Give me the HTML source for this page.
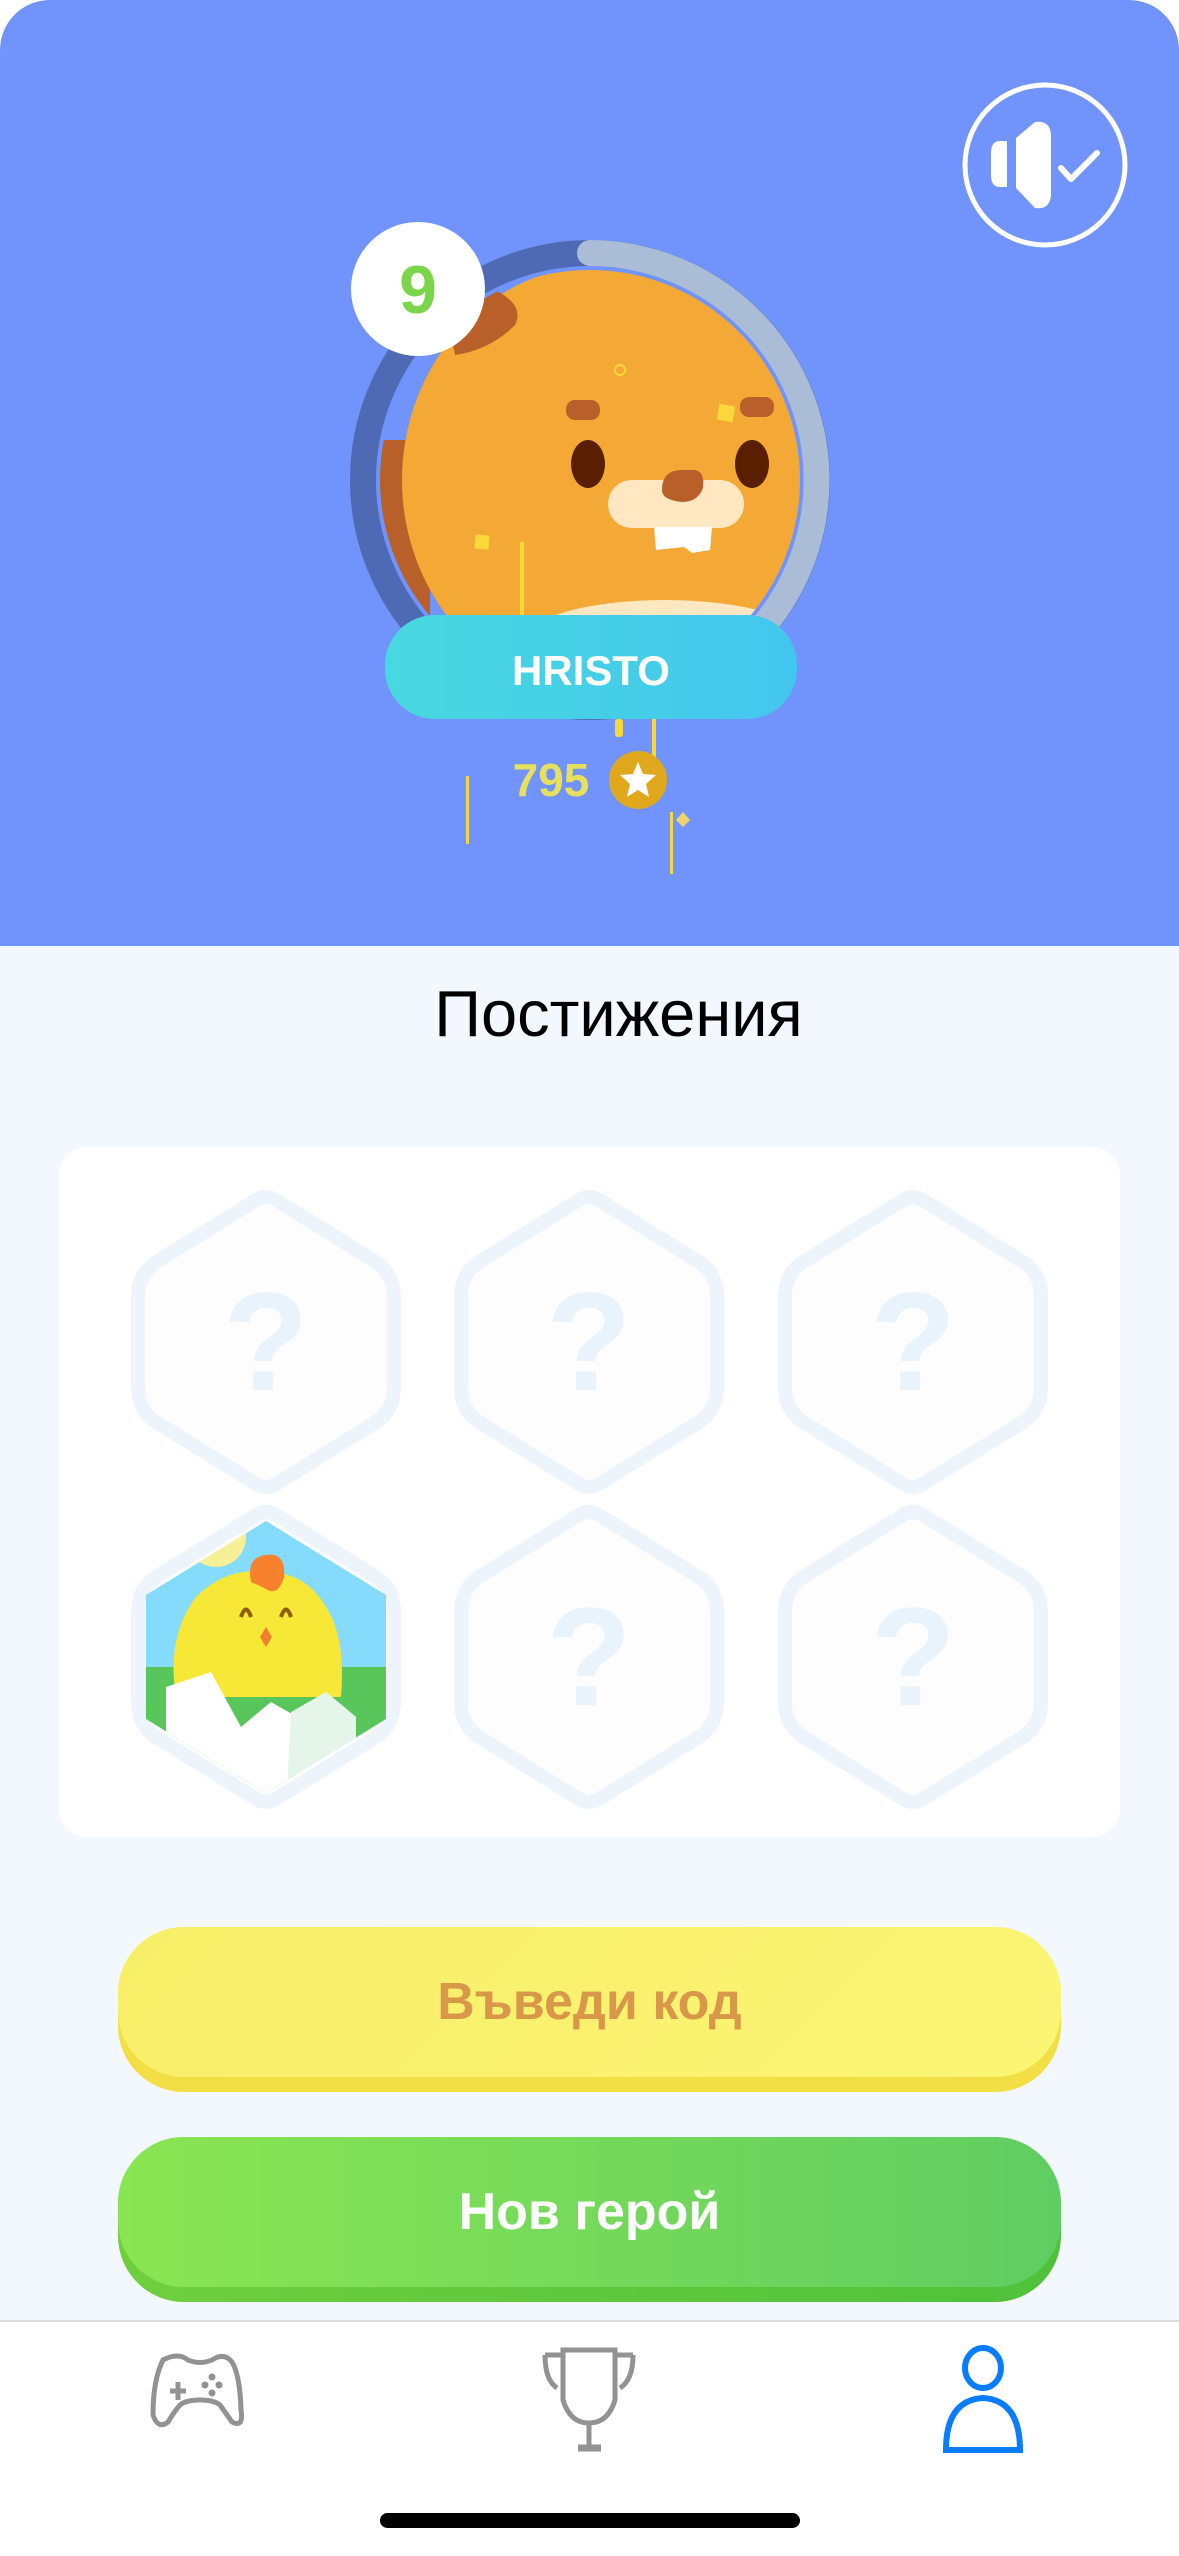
<!DOCTYPE html>
<html><head><meta charset="utf-8"><style>
*{margin:0;padding:0;box-sizing:border-box}
html,body{width:1179px;height:2556px;overflow:hidden;background:#fff;font-family:"Liberation Sans","DejaVu Sans",sans-serif}
.abs{position:absolute}
#bg{left:0;top:946px;width:1179px;height:1375px;background:#f3f8ff}
#hdr{left:0;top:0;width:1179px;height:946px;background:#7094fb;border-radius:50px 50px 0 0}
.title{left:29px;width:1179px;top:976px;text-align:center;font-size:65px;color:#000}
#card{left:59px;top:1147px;width:1061px;height:690px;background:#fff;border-radius:28px}
.btn{left:118px;width:943px;height:165px;border-radius:66px}
.face{position:absolute;left:0;top:0;width:943px;height:150px;border-radius:66px;text-align:center;line-height:150px;font-weight:bold;font-size:52px}
#tab{left:0;top:2320px;width:1179px;height:236px;background:#fff;border-top:2px solid #dcdcdc}
#home{left:380px;top:2513px;width:420px;height:15px;border-radius:8px;background:#000}
</style></head><body>
<div class="abs" id="bg"></div>
<div class="abs" id="hdr"></div>

<svg class="abs" style="left:0;top:0" width="1179" height="946">
  <defs>
    <clipPath id="inner"><circle cx="590" cy="480" r="210"/></clipPath>
    <linearGradient id="pill" x1="0" x2="1"><stop offset="0" stop-color="#48d8e0"/><stop offset="1" stop-color="#43c6ee"/></linearGradient>
  </defs>
  <circle cx="590" cy="480" r="227" fill="none" stroke="#4f6ab5" stroke-width="26"/>
  <path d="M590 253 A227 227 0 0 1 760 630" fill="none" stroke="#abbdd6" stroke-width="26" stroke-linecap="round"/>
  <g clip-path="url(#inner)">
    <rect x="370" y="440" width="60" height="200" fill="#b9602a" rx="10"/>
    <ellipse cx="602" cy="480" rx="200" ry="215" fill="#f4a836"/>
    <path d="M445 300 L495 290 Q525 305 515 325 Q490 350 455 355 Z" fill="#b9602a"/>
    <rect x="566" y="400" width="34" height="20" rx="9" fill="#b9602a"/>
    <rect x="740" y="397" width="34" height="20" rx="9" fill="#b9602a"/>
    <ellipse cx="588" cy="464" rx="17" ry="24" fill="#5a1e00"/>
    <ellipse cx="752" cy="464" rx="17" ry="24" fill="#5a1e00"/>
    <rect x="608" y="480" width="136" height="48" rx="24" fill="#fee7c1"/>
    <path d="M662 490 Q662 470 682 470 L695 470 Q705 472 703 488 Q698 502 682 502 Q662 500 662 490Z" fill="#b9602a"/>
    <path d="M654 527 L712 527 L710 550 L692 553 L684 547 L656 550Z" fill="#fff"/>
    <ellipse cx="665" cy="640" rx="140" ry="40" fill="#fee7c1"/>
    <rect x="520" y="542" width="4" height="80" fill="#fbd83a"/>
  </g>
  <rect x="475" y="535" width="14" height="14" fill="#fbd83a" transform="rotate(5 482 542)"/>
  <rect x="718" y="405" width="16" height="16" fill="#fbd83a" transform="rotate(10 726 413)"/>
  <circle cx="620" cy="370" r="5" fill="none" stroke="#fbd83a" stroke-width="2"/>
  <circle cx="418" cy="289" r="67" fill="#fff"/>
  <text x="418" y="313" text-anchor="middle" font-size="68" font-weight="bold" fill="#7bd54a">9</text>
  <rect x="385" y="615" width="412" height="104" rx="50" fill="url(#pill)"/>
  <text x="591" y="685" text-anchor="middle" font-size="42" font-weight="bold" fill="#fff">HRISTO</text>
  <rect x="615" y="719" width="8" height="18" rx="3" fill="#fbd83a"/>
  <rect x="652" y="719" width="4" height="40" fill="#fbd83a"/>
  <text x="551" y="796" text-anchor="middle" font-size="46" font-weight="bold" fill="#e6e05c">795</text>
  <circle cx="638" cy="780" r="29" fill="#e0a81c"/>
  <path d="M638 762 L643 774 L656 775 L646 784 L649 797 L638 790 L627 797 L630 784 L620 775 L633 774Z" fill="#fff"/>
  <rect x="466" y="776" width="3" height="68" fill="#fbd83a"/>
  <rect x="670" y="812" width="3" height="62" fill="#fbd83a"/>
  <path d="M683 812 L690 820 L683 827 L676 820Z" fill="#f1d36a"/>
  <circle cx="1045" cy="165" r="80" fill="none" stroke="#fff" stroke-width="5"/>
  <path d="M1007 141 L1007 187 L1000 187 Q991 187 991 175 L991 153 Q991 141 1000 141Z" fill="#fff"/>
  <path d="M1016 138 L1035 122 Q1050 120 1051 135 L1051 195 Q1050 210 1035 208 L1016 188Z" fill="#fff"/>
  <path d="M1061 168 L1071 179 L1097 153" fill="none" stroke="#fff" stroke-width="6" stroke-linecap="round" stroke-linejoin="round"/>
</svg>

<div class="abs title">Постижения</div>
<div class="abs" id="card"></div>

<svg class="abs" style="left:0;top:1140px" width="1179" height="700">
  <defs>
    <g id="hex"><path d="M-10 -142 Q0 -148 10 -142 L110 -80 Q128 -68 128 -45 L128 45 Q128 68 110 80 L10 142 Q0 148 -10 142 L-110 80 Q-128 68 -128 45 L-128 -45 Q-128 -68 -110 -80Z" fill="#fdfdfd" stroke="#eef4fb" stroke-width="14" stroke-linejoin="round"/></g>
    <g id="q"><use href="#hex"/><text x="0" y="48" text-anchor="middle" font-size="140" font-weight="bold" fill="#e8f3fc">?</text></g>
    <clipPath id="hc"><path d="M0 -136 L120 -62 L120 62 L0 136 L-120 62 L-120 -62Z"/></clipPath>
  </defs>
  <use href="#q" x="266" y="202"/>
  <use href="#q" x="589" y="202"/>
  <use href="#q" x="913" y="202"/>
  <use href="#q" x="589" y="517"/>
  <use href="#q" x="913" y="517"/>
  <g transform="translate(266 517)">
    <use href="#hex"/>
    <g clip-path="url(#hc)">
      <rect x="-130" y="-140" width="260" height="150" fill="#85dbfb"/>
      <rect x="-130" y="10" width="260" height="140" fill="#58c65a"/>
      <circle cx="-50" cy="-120" r="30" fill="#f7f097"/>
      <path d="M-90 40 Q-100 -20 -70 -60 Q-40 -90 0 -85 Q40 -85 60 -50 Q80 -20 75 40Z" fill="#f7e737"/>
      <path d="M-15 -75 Q-20 -100 0 -102 Q20 -105 18 -80 Q12 -60 0 -68 Q-8 -72 -15 -75Z" fill="#f8812d"/>
      <path d="M-25 -40 Q-20 -55 -15 -40" fill="none" stroke="#8b5e00" stroke-width="4"/>
      <path d="M15 -40 Q20 -55 25 -40" fill="none" stroke="#8b5e00" stroke-width="4"/>
      <path d="M-6 -20 L0 -30 L6 -20 L0 -10Z" fill="#f08030"/>
      <path d="M-100 30 L-55 15 L-25 70 L5 45 L40 65 L60 35 L90 60 L90 150 L-100 150Z" fill="#fff"/>
      <path d="M25 55 L60 35 L90 60 L90 150 L20 150Z" fill="#e6f5ea"/>
    </g>
  </g>
</svg>

<div class="abs btn" style="top:1927px;background:#f2df45">
  <div class="face" style="background:linear-gradient(135deg,#f8ef68,#fbf575);color:#d9974a">Въведи код</div>
</div>
<div class="abs btn" style="top:2137px;background:linear-gradient(90deg,#6fcf3e,#4fc13b)">
  <div class="face" style="background:linear-gradient(90deg,#8ae552,#60cd62);color:#fff">Нов герой</div>
</div>

<div class="abs" id="tab"></div>
<svg class="abs" style="left:0;top:2320px" width="1179" height="140">
  <g fill="none" stroke="#929292" stroke-width="5">
    <path d="M163 40 Q178 32 188 40 Q200 45 212 40 Q224 32 232 42 Q240 55 241 90 Q244 108 232 102 Q225 92 220 85 Q214 80 200 80 Q186 80 180 85 Q174 92 168 102 Q158 110 153 95 Q153 60 163 40Z"/>
    <path d="M178 62 L178 80 M170 71 L186 71"/>
    <path d="M545 35 L563 35 M545 35 Q545 60 557 68 M615 35 L633 35 M633 35 Q633 60 620 68 M563 30 L615 30 L615 80 Q608 103 589 103 Q570 103 563 80Z M589 103 L589 128"/>
    <path d="M578 128 L601 128" stroke-width="7"/>
  </g>
  <g fill="#929292"><circle cx="212" cy="57" r="3.5"/><circle cx="205" cy="65" r="3.5"/><circle cx="219" cy="65" r="3.5"/><circle cx="212" cy="73" r="3.5"/></g>
  <g fill="none" stroke="#0a7cff" stroke-width="6">
    <ellipse cx="983" cy="48" rx="18" ry="20"/>
    <path d="M946 130 Q946 80 983 78 Q1020 80 1020 130Z"/>
  </g>
</svg>
<div class="abs" id="home"></div>
</body></html>
